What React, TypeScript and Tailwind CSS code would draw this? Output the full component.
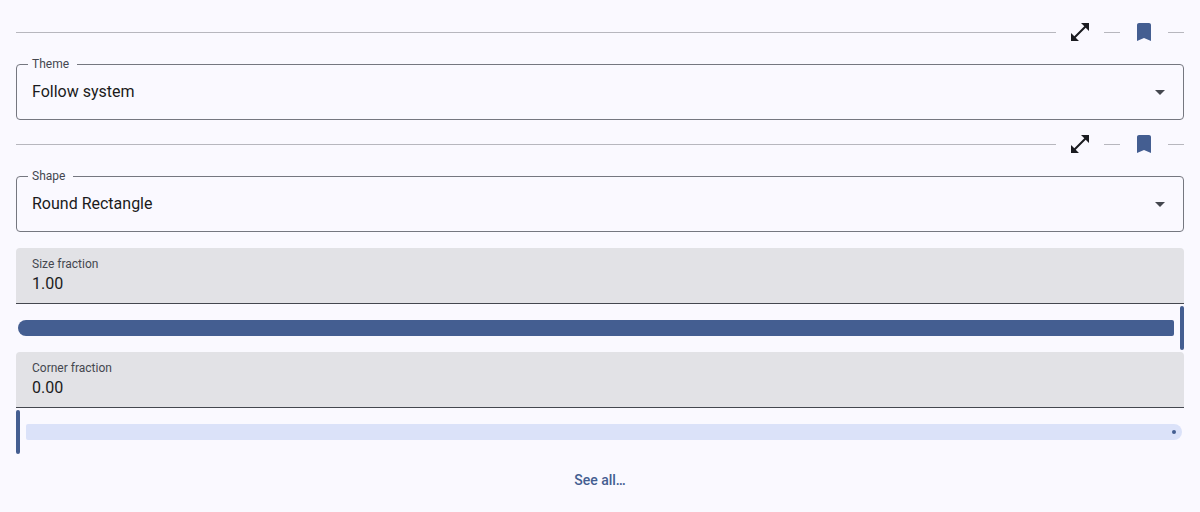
import { useId, useState } from "react";

function ExpandIcon() {
  return (
    <svg viewBox="0 0 24 24" className="size-6 fill-[#1a1b20]" aria-hidden="true">
      <path d="M21 11V3h-8l3.29 3.29-10 10L3 13v8h8l-3.29-3.29 10-10z" />
    </svg>
  );
}

function BookmarkIcon() {
  return (
    <svg viewBox="0 0 24 24" className="size-6 fill-[#445e91]" aria-hidden="true">
      <path d="M17 3H7c-1.1 0-2 .9-2 2v16l7-3 7 3V5c0-1.1-.9-2-2-2z" />
    </svg>
  );
}

function SectionHeader({ name }: { name: string }) {
  return (
    <div className="flex h-12 items-center">
      <div className="h-px grow bg-[#b7b7be]" />
      <button type="button" aria-label={`Expand ${name}`} className="flex size-12 items-center justify-center rounded-full">
        <ExpandIcon />
      </button>
      <div className="h-px w-4 bg-[#b7b7be]" />
      <button type="button" aria-label={`Bookmark ${name}`} className="flex size-12 items-center justify-center rounded-full">
        <BookmarkIcon />
      </button>
      <div className="h-px w-4 bg-[#b7b7be]" />
    </div>
  );
}

function OutlinedSelect({ label, options }: { label: string; options: string[] }) {
  const id = useId();
  return (
    <fieldset className="min-w-0 rounded-sm border border-[#757780] pb-[7px]">
      <legend className="ml-[11px] pr-2 pl-1 text-xs leading-4 text-[#44474f]">
        <label htmlFor={id} className="block">{label}</label>
      </legend>
      <div className="grid items-center">
        <select id={id} className="col-start-1 row-start-1 h-10 w-full appearance-none bg-transparent pr-12 pl-[15px] text-base text-[#1a1b20] outline-none">
          {options.map((option) => (
            <option key={option}>{option}</option>
          ))}
        </select>
        <svg viewBox="0 0 24 24" className="pointer-events-none col-start-1 row-start-1 mr-[11px] size-6 justify-self-end fill-[#44474f]" aria-hidden="true">
          <path d="M7 10l5 5 5-5z" />
        </svg>
      </div>
    </fieldset>
  );
}

function FractionControl({ label, initial }: { label: string; initial: number }) {
  const id = useId();
  const [value, setValue] = useState(initial);
  const [text, setText] = useState(initial.toFixed(2));

  const commitText = (next: string) => {
    setText(next);
    const parsed = Number(next);
    if (next.trim() !== "" && parsed >= 0 && parsed <= 1) setValue(parsed);
  };

  return (
    <div>
      <div className="flex h-14 flex-col rounded-t-sm border-b border-[#44474f] bg-[#e2e2e6] px-4 pt-2">
        <label htmlFor={id} className="text-xs leading-4 text-[#44474f]">{label}</label>
        <input
          id={id}
          inputMode="decimal"
          value={text}
          onChange={(event) => commitText(event.target.value)}
          className="h-6 w-full bg-transparent text-base leading-6 text-[#1a1b20] outline-none"
        />
      </div>
      <div className="relative flex h-12 items-center">
        {value > 0 && (
          <div className="mr-1.5 ml-0.5 h-4 basis-0 rounded-l-lg rounded-r-xs bg-[#445e91]" style={{ flexGrow: value }} />
        )}
        <div className="h-11 w-1 shrink-0 rounded-full bg-[#445e91]" />
        {value < 1 && (
          <div
            className="mr-0.5 ml-1.5 flex h-4 basis-0 items-center justify-end rounded-l-xs rounded-r-lg bg-[#dbe2f9] pr-1.5"
            style={{ flexGrow: 1 - value }}
          >
            <div className="size-1 rounded-full bg-[#445e91]" />
          </div>
        )}
        <input
          type="range"
          aria-label={label}
          min={0}
          max={1}
          step={0.01}
          value={value}
          onChange={(event) => {
            const next = Number(event.target.value);
            setValue(next);
            setText(next.toFixed(2));
          }}
          className="absolute inset-0 size-full cursor-pointer opacity-0"
        />
      </div>
    </div>
  );
}

export default function App() {
  return (
    <main className="min-h-screen bg-[#faf9ff] px-4 py-2 font-[Roboto,sans-serif]">
      <SectionHeader name="theme" />
      <OutlinedSelect label="Theme" options={["Follow system", "Light", "Dark"]} />
      <SectionHeader name="shape" />
      <OutlinedSelect label="Shape" options={["Round Rectangle", "Rectangle", "Circle"]} />
      <div className="mt-4">
        <FractionControl label="Size fraction" initial={1} />
        <FractionControl label="Corner fraction" initial={0} />
      </div>
      <div className="flex justify-center">
        <button type="button" className="h-12 px-3 text-sm font-medium text-[#445e91]">See all…</button>
      </div>
    </main>
  );
}
